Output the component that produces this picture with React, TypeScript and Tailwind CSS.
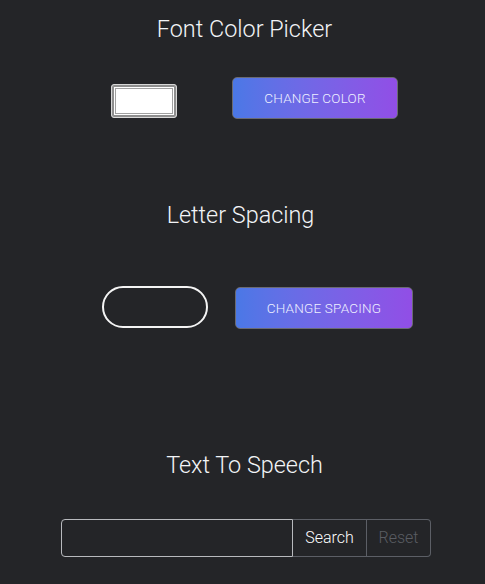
export default function App() {
  return (
    <div className="min-h-[584px] w-full bg-[#242528] font-['Roboto',sans-serif] text-white">
      {/* Font color picker */}
      <h2 className="pt-[13px] pl-[4px] text-center text-[23.4px] leading-[32px] font-light text-[#f2f4f7]">
        Font Color Picker
      </h2>
      <div className="mt-[32px] flex items-center pl-[111px]">
        <div className="mt-[6px] h-[34px] w-[66px] rounded-[3px] border border-[#d8d8d8] bg-white p-0">
          <div className="h-full w-full rounded-[2px] border-[2px] border-[#8e8e8e] bg-white p-[1px]">
            <div className="h-full w-full border border-[#a0a0a0] bg-white" />
          </div>
        </div>
        <button className="ml-[55px] h-[42px] w-[166px] rounded-[5px] border border-[#6b6b72] bg-gradient-to-r from-[#4a78e6] to-[#914ee6] text-[13.5px] font-light tracking-[0.2px] text-[#eef0ff]">
          CHANGE COLOR
        </button>
      </div>

      {/* Letter spacing */}
      <h2 className="mt-[80px] pr-[4px] text-center text-[23.4px] leading-[32px] font-light text-[#f2f4f7]">
        Letter Spacing
      </h2>
      <div className="mt-[54px] flex items-center pl-[102px]">
        <input className="h-[42px] w-[106px] rounded-full border-2 border-[#f4f4f4] bg-transparent outline-none" />
        <button className="mt-[2px] ml-[27px] h-[42px] w-[178px] rounded-[5px] border border-[#6b6b72] bg-gradient-to-r from-[#4a78e6] to-[#914ee6] text-[13.5px] font-light tracking-[0.2px] text-[#eef0ff]">
          CHANGE SPACING
        </button>
      </div>

      {/* Text to speech */}
      <h2 className="mt-[120px] pl-[4px] text-center text-[23.4px] leading-[32px] font-light text-[#f2f4f7]">
        Text To Speech
      </h2>
      <div className="mt-[38px] flex h-[38px] pl-[61px]">
        <input className="h-full w-[232px] rounded-l-[4px] border border-[#b8babe] bg-transparent outline-none" />
        <button className="h-full w-[74px] border-y border-r border-[#5c5f66] text-[16px] font-light text-white">
          Search
        </button>
        <button className="h-full w-[64px] rounded-r-[4px] border-y border-r border-[#5c5f66] text-[16px] font-light text-[#5a5d63]">
          Reset
        </button>
      </div>
    </div>
  )
}
